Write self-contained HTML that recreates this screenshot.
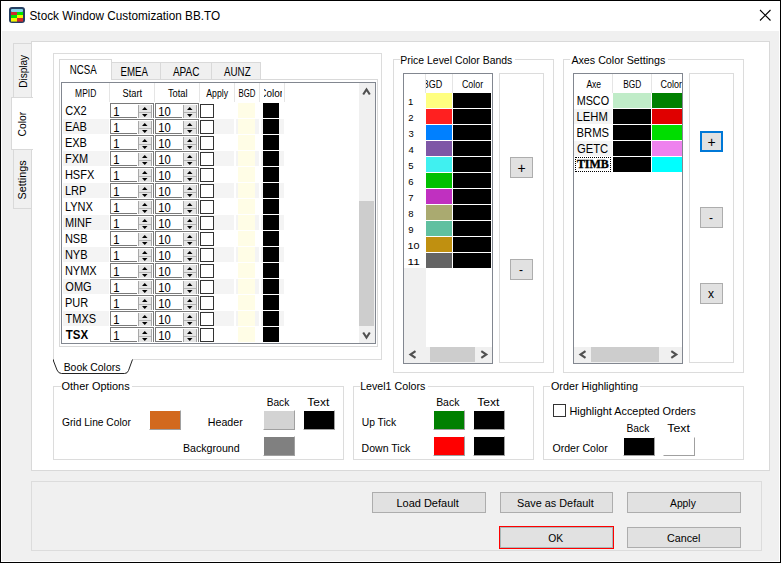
<!DOCTYPE html>
<html><head><meta charset="utf-8"><style>
html,body{margin:0;padding:0;width:781px;height:563px;overflow:hidden;background:#000}
body{position:relative;font-family:"Liberation Sans", sans-serif;}
div,svg{position:absolute}
</style></head><body>
<div style="left:0px;top:0px;width:781px;height:563px;background:#000"></div>
<div style="left:1px;top:1px;width:779px;height:561px;background:#fff"></div>
<div style="left:2px;top:31px;width:777px;height:530px;background:#f0f0f0"></div>
<svg style="left:9px;top:7px" width="16" height="16" viewBox="0 0 16 16"><rect x="0" y="0" width="16" height="16" rx="3" fill="#263f62"/>
<rect x="2" y="2" width="12" height="3" rx="1" fill="#86d2ea"/>
<rect x="2" y="5" width="6" height="3" fill="#d02a2a"/><rect x="8" y="5" width="6" height="3" fill="#00e400"/>
<rect x="2" y="8" width="6" height="3" fill="#00e400"/><rect x="8" y="8" width="6" height="3" fill="#f4f400"/>
<rect x="2" y="11" width="6" height="3.6" fill="#f4f400"/><rect x="8" y="11" width="6" height="3.6" fill="#d02a2a"/></svg>
<svg style="left:759px;top:9px" width="13" height="13" viewBox="0 0 13 13"><path d="M1 1L11.5 11.5M11.5 1L1 11.5" stroke="#000" stroke-width="1.1"/></svg>
<div style="left:31px;top:41px;width:739px;height:430px;border:1px solid #d9d9d9;box-sizing:border-box;background:#fff;"></div>
<div style="left:13px;top:43px;width:19px;height:55px;border:1px solid #d9d9d9;box-sizing:border-box;background:#f0f0f0;"></div>
<div style="left:13px;top:149px;width:19px;height:60px;border:1px solid #d9d9d9;box-sizing:border-box;background:#f0f0f0;"></div>
<div style="left:11px;top:97px;width:22px;height:53px;border:1px solid #d9d9d9;border-right:none;box-sizing:border-box;background:#fff"></div>
<div style="left:53px;top:53px;width:329px;height:307px;border:1px solid #dcdcdc;box-sizing:border-box;background:#fff;"></div>
<div style="left:59px;top:79px;width:319px;height:268px;border:1px solid #d9d9d9;box-sizing:border-box;background:#fff;"></div>
<div style="left:111px;top:62px;width:50px;height:18px;border:1px solid #d9d9d9;box-sizing:border-box;background:#f0f0f0;"></div>
<div style="left:160px;top:62px;width:52px;height:18px;border:1px solid #d9d9d9;box-sizing:border-box;background:#f0f0f0;"></div>
<div style="left:211px;top:62px;width:50px;height:18px;border:1px solid #d9d9d9;box-sizing:border-box;background:#f0f0f0;"></div>
<div style="left:59px;top:59px;width:53px;height:21px;border:1px solid #d9d9d9;border-bottom:none;box-sizing:border-box;background:#fff"></div>
<div style="left:61px;top:82px;width:315px;height:262px;border:1px solid #828790;box-sizing:border-box;background:#fff;"></div>
<div style="left:109px;top:83px;width:1px;height:19px;background:#e5e5e5"></div>
<div style="left:154px;top:83px;width:1px;height:19px;background:#e5e5e5"></div>
<div style="left:199px;top:83px;width:1px;height:19px;background:#e5e5e5"></div>
<div style="left:234px;top:83px;width:1px;height:19px;background:#e5e5e5"></div>
<div style="left:259px;top:83px;width:1px;height:19px;background:#e5e5e5"></div>
<div style="left:284px;top:83px;width:1px;height:19px;background:#e5e5e5"></div>
<div style="left:110px;top:103px;width:44px;height:15px;border:1px solid #7a7a7a;border-bottom:none;box-sizing:border-box;background:#fff"></div>
<div style="left:110px;top:117px;width:27px;height:1px;background:#7a7a7a"></div>
<div style="left:139px;top:105px;width:12px;height:13px;background:#e6e6e6"></div>
<div style="left:138px;top:105px;width:1px;height:13px;background:#a8a8a8"></div>
<div style="left:151px;top:105px;width:1px;height:13px;background:#a8a8a8"></div>
<div style="left:139px;top:112px;width:12px;height:1px;background:#b4b4b4"></div>
<svg style="left:138px;top:103px" width="14" height="16" viewBox="0 0 14 16"><path d="M4 7L9.5 7L6.75 4Z" fill="#000"/><path d="M4 11L9.5 11L6.75 14Z" fill="#000"/></svg>
<div style="left:155px;top:103px;width:44px;height:15px;border:1px solid #7a7a7a;border-bottom:none;box-sizing:border-box;background:#fff"></div>
<div style="left:155px;top:117px;width:27px;height:1px;background:#7a7a7a"></div>
<div style="left:184px;top:105px;width:12px;height:13px;background:#e6e6e6"></div>
<div style="left:183px;top:105px;width:1px;height:13px;background:#a8a8a8"></div>
<div style="left:196px;top:105px;width:1px;height:13px;background:#a8a8a8"></div>
<div style="left:184px;top:112px;width:12px;height:1px;background:#b4b4b4"></div>
<svg style="left:183px;top:103px" width="14" height="16" viewBox="0 0 14 16"><path d="M4 7L9.5 7L6.75 4Z" fill="#000"/><path d="M4 11L9.5 11L6.75 14Z" fill="#000"/></svg>
<div style="left:200px;top:104px;width:14px;height:14px;border:1px solid #333;box-sizing:border-box;background:#fff;"></div>
<div style="left:238px;top:103px;width:17px;height:15px;background:#fffde6"></div>
<div style="left:263px;top:103px;width:16px;height:15px;background:#000"></div>
<div style="left:63px;top:119px;width:46px;height:15px;background:#f4f4f4"></div>
<div style="left:111px;top:119px;width:43px;height:15px;background:#f4f4f4"></div>
<div style="left:156px;top:119px;width:43px;height:15px;background:#f4f4f4"></div>
<div style="left:201px;top:119px;width:33px;height:15px;background:#f4f4f4"></div>
<div style="left:236px;top:119px;width:23px;height:15px;background:#f4f4f4"></div>
<div style="left:261px;top:119px;width:23px;height:15px;background:#f4f4f4"></div>
<div style="left:110px;top:119px;width:44px;height:15px;border:1px solid #7a7a7a;border-bottom:none;box-sizing:border-box;background:#fff"></div>
<div style="left:110px;top:133px;width:27px;height:1px;background:#7a7a7a"></div>
<div style="left:139px;top:121px;width:12px;height:13px;background:#e6e6e6"></div>
<div style="left:138px;top:121px;width:1px;height:13px;background:#a8a8a8"></div>
<div style="left:151px;top:121px;width:1px;height:13px;background:#a8a8a8"></div>
<div style="left:139px;top:128px;width:12px;height:1px;background:#b4b4b4"></div>
<svg style="left:138px;top:119px" width="14" height="16" viewBox="0 0 14 16"><path d="M4 7L9.5 7L6.75 4Z" fill="#000"/><path d="M4 11L9.5 11L6.75 14Z" fill="#000"/></svg>
<div style="left:155px;top:119px;width:44px;height:15px;border:1px solid #7a7a7a;border-bottom:none;box-sizing:border-box;background:#fff"></div>
<div style="left:155px;top:133px;width:27px;height:1px;background:#7a7a7a"></div>
<div style="left:184px;top:121px;width:12px;height:13px;background:#e6e6e6"></div>
<div style="left:183px;top:121px;width:1px;height:13px;background:#a8a8a8"></div>
<div style="left:196px;top:121px;width:1px;height:13px;background:#a8a8a8"></div>
<div style="left:184px;top:128px;width:12px;height:1px;background:#b4b4b4"></div>
<svg style="left:183px;top:119px" width="14" height="16" viewBox="0 0 14 16"><path d="M4 7L9.5 7L6.75 4Z" fill="#000"/><path d="M4 11L9.5 11L6.75 14Z" fill="#000"/></svg>
<div style="left:200px;top:120px;width:14px;height:14px;border:1px solid #333;box-sizing:border-box;background:#fff;"></div>
<div style="left:238px;top:119px;width:17px;height:15px;background:#fffde6"></div>
<div style="left:263px;top:119px;width:16px;height:15px;background:#000"></div>
<div style="left:110px;top:135px;width:44px;height:15px;border:1px solid #7a7a7a;border-bottom:none;box-sizing:border-box;background:#fff"></div>
<div style="left:110px;top:149px;width:27px;height:1px;background:#7a7a7a"></div>
<div style="left:139px;top:137px;width:12px;height:13px;background:#e6e6e6"></div>
<div style="left:138px;top:137px;width:1px;height:13px;background:#a8a8a8"></div>
<div style="left:151px;top:137px;width:1px;height:13px;background:#a8a8a8"></div>
<div style="left:139px;top:144px;width:12px;height:1px;background:#b4b4b4"></div>
<svg style="left:138px;top:135px" width="14" height="16" viewBox="0 0 14 16"><path d="M4 7L9.5 7L6.75 4Z" fill="#000"/><path d="M4 11L9.5 11L6.75 14Z" fill="#000"/></svg>
<div style="left:155px;top:135px;width:44px;height:15px;border:1px solid #7a7a7a;border-bottom:none;box-sizing:border-box;background:#fff"></div>
<div style="left:155px;top:149px;width:27px;height:1px;background:#7a7a7a"></div>
<div style="left:184px;top:137px;width:12px;height:13px;background:#e6e6e6"></div>
<div style="left:183px;top:137px;width:1px;height:13px;background:#a8a8a8"></div>
<div style="left:196px;top:137px;width:1px;height:13px;background:#a8a8a8"></div>
<div style="left:184px;top:144px;width:12px;height:1px;background:#b4b4b4"></div>
<svg style="left:183px;top:135px" width="14" height="16" viewBox="0 0 14 16"><path d="M4 7L9.5 7L6.75 4Z" fill="#000"/><path d="M4 11L9.5 11L6.75 14Z" fill="#000"/></svg>
<div style="left:200px;top:136px;width:14px;height:14px;border:1px solid #333;box-sizing:border-box;background:#fff;"></div>
<div style="left:238px;top:135px;width:17px;height:15px;background:#fffde6"></div>
<div style="left:263px;top:135px;width:16px;height:15px;background:#000"></div>
<div style="left:63px;top:151px;width:46px;height:15px;background:#f4f4f4"></div>
<div style="left:111px;top:151px;width:43px;height:15px;background:#f4f4f4"></div>
<div style="left:156px;top:151px;width:43px;height:15px;background:#f4f4f4"></div>
<div style="left:201px;top:151px;width:33px;height:15px;background:#f4f4f4"></div>
<div style="left:236px;top:151px;width:23px;height:15px;background:#f4f4f4"></div>
<div style="left:261px;top:151px;width:23px;height:15px;background:#f4f4f4"></div>
<div style="left:110px;top:151px;width:44px;height:15px;border:1px solid #7a7a7a;border-bottom:none;box-sizing:border-box;background:#fff"></div>
<div style="left:110px;top:165px;width:27px;height:1px;background:#7a7a7a"></div>
<div style="left:139px;top:153px;width:12px;height:13px;background:#e6e6e6"></div>
<div style="left:138px;top:153px;width:1px;height:13px;background:#a8a8a8"></div>
<div style="left:151px;top:153px;width:1px;height:13px;background:#a8a8a8"></div>
<div style="left:139px;top:160px;width:12px;height:1px;background:#b4b4b4"></div>
<svg style="left:138px;top:151px" width="14" height="16" viewBox="0 0 14 16"><path d="M4 7L9.5 7L6.75 4Z" fill="#000"/><path d="M4 11L9.5 11L6.75 14Z" fill="#000"/></svg>
<div style="left:155px;top:151px;width:44px;height:15px;border:1px solid #7a7a7a;border-bottom:none;box-sizing:border-box;background:#fff"></div>
<div style="left:155px;top:165px;width:27px;height:1px;background:#7a7a7a"></div>
<div style="left:184px;top:153px;width:12px;height:13px;background:#e6e6e6"></div>
<div style="left:183px;top:153px;width:1px;height:13px;background:#a8a8a8"></div>
<div style="left:196px;top:153px;width:1px;height:13px;background:#a8a8a8"></div>
<div style="left:184px;top:160px;width:12px;height:1px;background:#b4b4b4"></div>
<svg style="left:183px;top:151px" width="14" height="16" viewBox="0 0 14 16"><path d="M4 7L9.5 7L6.75 4Z" fill="#000"/><path d="M4 11L9.5 11L6.75 14Z" fill="#000"/></svg>
<div style="left:200px;top:152px;width:14px;height:14px;border:1px solid #333;box-sizing:border-box;background:#fff;"></div>
<div style="left:238px;top:151px;width:17px;height:15px;background:#fffde6"></div>
<div style="left:263px;top:151px;width:16px;height:15px;background:#000"></div>
<div style="left:110px;top:167px;width:44px;height:15px;border:1px solid #7a7a7a;border-bottom:none;box-sizing:border-box;background:#fff"></div>
<div style="left:110px;top:181px;width:27px;height:1px;background:#7a7a7a"></div>
<div style="left:139px;top:169px;width:12px;height:13px;background:#e6e6e6"></div>
<div style="left:138px;top:169px;width:1px;height:13px;background:#a8a8a8"></div>
<div style="left:151px;top:169px;width:1px;height:13px;background:#a8a8a8"></div>
<div style="left:139px;top:176px;width:12px;height:1px;background:#b4b4b4"></div>
<svg style="left:138px;top:167px" width="14" height="16" viewBox="0 0 14 16"><path d="M4 7L9.5 7L6.75 4Z" fill="#000"/><path d="M4 11L9.5 11L6.75 14Z" fill="#000"/></svg>
<div style="left:155px;top:167px;width:44px;height:15px;border:1px solid #7a7a7a;border-bottom:none;box-sizing:border-box;background:#fff"></div>
<div style="left:155px;top:181px;width:27px;height:1px;background:#7a7a7a"></div>
<div style="left:184px;top:169px;width:12px;height:13px;background:#e6e6e6"></div>
<div style="left:183px;top:169px;width:1px;height:13px;background:#a8a8a8"></div>
<div style="left:196px;top:169px;width:1px;height:13px;background:#a8a8a8"></div>
<div style="left:184px;top:176px;width:12px;height:1px;background:#b4b4b4"></div>
<svg style="left:183px;top:167px" width="14" height="16" viewBox="0 0 14 16"><path d="M4 7L9.5 7L6.75 4Z" fill="#000"/><path d="M4 11L9.5 11L6.75 14Z" fill="#000"/></svg>
<div style="left:200px;top:168px;width:14px;height:14px;border:1px solid #333;box-sizing:border-box;background:#fff;"></div>
<div style="left:238px;top:167px;width:17px;height:15px;background:#fffde6"></div>
<div style="left:263px;top:167px;width:16px;height:15px;background:#000"></div>
<div style="left:63px;top:183px;width:46px;height:15px;background:#f4f4f4"></div>
<div style="left:111px;top:183px;width:43px;height:15px;background:#f4f4f4"></div>
<div style="left:156px;top:183px;width:43px;height:15px;background:#f4f4f4"></div>
<div style="left:201px;top:183px;width:33px;height:15px;background:#f4f4f4"></div>
<div style="left:236px;top:183px;width:23px;height:15px;background:#f4f4f4"></div>
<div style="left:261px;top:183px;width:23px;height:15px;background:#f4f4f4"></div>
<div style="left:110px;top:183px;width:44px;height:15px;border:1px solid #7a7a7a;border-bottom:none;box-sizing:border-box;background:#fff"></div>
<div style="left:110px;top:197px;width:27px;height:1px;background:#7a7a7a"></div>
<div style="left:139px;top:185px;width:12px;height:13px;background:#e6e6e6"></div>
<div style="left:138px;top:185px;width:1px;height:13px;background:#a8a8a8"></div>
<div style="left:151px;top:185px;width:1px;height:13px;background:#a8a8a8"></div>
<div style="left:139px;top:192px;width:12px;height:1px;background:#b4b4b4"></div>
<svg style="left:138px;top:183px" width="14" height="16" viewBox="0 0 14 16"><path d="M4 7L9.5 7L6.75 4Z" fill="#000"/><path d="M4 11L9.5 11L6.75 14Z" fill="#000"/></svg>
<div style="left:155px;top:183px;width:44px;height:15px;border:1px solid #7a7a7a;border-bottom:none;box-sizing:border-box;background:#fff"></div>
<div style="left:155px;top:197px;width:27px;height:1px;background:#7a7a7a"></div>
<div style="left:184px;top:185px;width:12px;height:13px;background:#e6e6e6"></div>
<div style="left:183px;top:185px;width:1px;height:13px;background:#a8a8a8"></div>
<div style="left:196px;top:185px;width:1px;height:13px;background:#a8a8a8"></div>
<div style="left:184px;top:192px;width:12px;height:1px;background:#b4b4b4"></div>
<svg style="left:183px;top:183px" width="14" height="16" viewBox="0 0 14 16"><path d="M4 7L9.5 7L6.75 4Z" fill="#000"/><path d="M4 11L9.5 11L6.75 14Z" fill="#000"/></svg>
<div style="left:200px;top:184px;width:14px;height:14px;border:1px solid #333;box-sizing:border-box;background:#fff;"></div>
<div style="left:238px;top:183px;width:17px;height:15px;background:#fffde6"></div>
<div style="left:263px;top:183px;width:16px;height:15px;background:#000"></div>
<div style="left:110px;top:199px;width:44px;height:15px;border:1px solid #7a7a7a;border-bottom:none;box-sizing:border-box;background:#fff"></div>
<div style="left:110px;top:213px;width:27px;height:1px;background:#7a7a7a"></div>
<div style="left:139px;top:201px;width:12px;height:13px;background:#e6e6e6"></div>
<div style="left:138px;top:201px;width:1px;height:13px;background:#a8a8a8"></div>
<div style="left:151px;top:201px;width:1px;height:13px;background:#a8a8a8"></div>
<div style="left:139px;top:208px;width:12px;height:1px;background:#b4b4b4"></div>
<svg style="left:138px;top:199px" width="14" height="16" viewBox="0 0 14 16"><path d="M4 7L9.5 7L6.75 4Z" fill="#000"/><path d="M4 11L9.5 11L6.75 14Z" fill="#000"/></svg>
<div style="left:155px;top:199px;width:44px;height:15px;border:1px solid #7a7a7a;border-bottom:none;box-sizing:border-box;background:#fff"></div>
<div style="left:155px;top:213px;width:27px;height:1px;background:#7a7a7a"></div>
<div style="left:184px;top:201px;width:12px;height:13px;background:#e6e6e6"></div>
<div style="left:183px;top:201px;width:1px;height:13px;background:#a8a8a8"></div>
<div style="left:196px;top:201px;width:1px;height:13px;background:#a8a8a8"></div>
<div style="left:184px;top:208px;width:12px;height:1px;background:#b4b4b4"></div>
<svg style="left:183px;top:199px" width="14" height="16" viewBox="0 0 14 16"><path d="M4 7L9.5 7L6.75 4Z" fill="#000"/><path d="M4 11L9.5 11L6.75 14Z" fill="#000"/></svg>
<div style="left:200px;top:200px;width:14px;height:14px;border:1px solid #333;box-sizing:border-box;background:#fff;"></div>
<div style="left:238px;top:199px;width:17px;height:15px;background:#fffde6"></div>
<div style="left:263px;top:199px;width:16px;height:15px;background:#000"></div>
<div style="left:63px;top:215px;width:46px;height:15px;background:#f4f4f4"></div>
<div style="left:111px;top:215px;width:43px;height:15px;background:#f4f4f4"></div>
<div style="left:156px;top:215px;width:43px;height:15px;background:#f4f4f4"></div>
<div style="left:201px;top:215px;width:33px;height:15px;background:#f4f4f4"></div>
<div style="left:236px;top:215px;width:23px;height:15px;background:#f4f4f4"></div>
<div style="left:261px;top:215px;width:23px;height:15px;background:#f4f4f4"></div>
<div style="left:110px;top:215px;width:44px;height:15px;border:1px solid #7a7a7a;border-bottom:none;box-sizing:border-box;background:#fff"></div>
<div style="left:110px;top:229px;width:27px;height:1px;background:#7a7a7a"></div>
<div style="left:139px;top:217px;width:12px;height:13px;background:#e6e6e6"></div>
<div style="left:138px;top:217px;width:1px;height:13px;background:#a8a8a8"></div>
<div style="left:151px;top:217px;width:1px;height:13px;background:#a8a8a8"></div>
<div style="left:139px;top:224px;width:12px;height:1px;background:#b4b4b4"></div>
<svg style="left:138px;top:215px" width="14" height="16" viewBox="0 0 14 16"><path d="M4 7L9.5 7L6.75 4Z" fill="#000"/><path d="M4 11L9.5 11L6.75 14Z" fill="#000"/></svg>
<div style="left:155px;top:215px;width:44px;height:15px;border:1px solid #7a7a7a;border-bottom:none;box-sizing:border-box;background:#fff"></div>
<div style="left:155px;top:229px;width:27px;height:1px;background:#7a7a7a"></div>
<div style="left:184px;top:217px;width:12px;height:13px;background:#e6e6e6"></div>
<div style="left:183px;top:217px;width:1px;height:13px;background:#a8a8a8"></div>
<div style="left:196px;top:217px;width:1px;height:13px;background:#a8a8a8"></div>
<div style="left:184px;top:224px;width:12px;height:1px;background:#b4b4b4"></div>
<svg style="left:183px;top:215px" width="14" height="16" viewBox="0 0 14 16"><path d="M4 7L9.5 7L6.75 4Z" fill="#000"/><path d="M4 11L9.5 11L6.75 14Z" fill="#000"/></svg>
<div style="left:200px;top:216px;width:14px;height:14px;border:1px solid #333;box-sizing:border-box;background:#fff;"></div>
<div style="left:238px;top:215px;width:17px;height:15px;background:#fffde6"></div>
<div style="left:263px;top:215px;width:16px;height:15px;background:#000"></div>
<div style="left:110px;top:231px;width:44px;height:15px;border:1px solid #7a7a7a;border-bottom:none;box-sizing:border-box;background:#fff"></div>
<div style="left:110px;top:245px;width:27px;height:1px;background:#7a7a7a"></div>
<div style="left:139px;top:233px;width:12px;height:13px;background:#e6e6e6"></div>
<div style="left:138px;top:233px;width:1px;height:13px;background:#a8a8a8"></div>
<div style="left:151px;top:233px;width:1px;height:13px;background:#a8a8a8"></div>
<div style="left:139px;top:240px;width:12px;height:1px;background:#b4b4b4"></div>
<svg style="left:138px;top:231px" width="14" height="16" viewBox="0 0 14 16"><path d="M4 7L9.5 7L6.75 4Z" fill="#000"/><path d="M4 11L9.5 11L6.75 14Z" fill="#000"/></svg>
<div style="left:155px;top:231px;width:44px;height:15px;border:1px solid #7a7a7a;border-bottom:none;box-sizing:border-box;background:#fff"></div>
<div style="left:155px;top:245px;width:27px;height:1px;background:#7a7a7a"></div>
<div style="left:184px;top:233px;width:12px;height:13px;background:#e6e6e6"></div>
<div style="left:183px;top:233px;width:1px;height:13px;background:#a8a8a8"></div>
<div style="left:196px;top:233px;width:1px;height:13px;background:#a8a8a8"></div>
<div style="left:184px;top:240px;width:12px;height:1px;background:#b4b4b4"></div>
<svg style="left:183px;top:231px" width="14" height="16" viewBox="0 0 14 16"><path d="M4 7L9.5 7L6.75 4Z" fill="#000"/><path d="M4 11L9.5 11L6.75 14Z" fill="#000"/></svg>
<div style="left:200px;top:232px;width:14px;height:14px;border:1px solid #333;box-sizing:border-box;background:#fff;"></div>
<div style="left:238px;top:231px;width:17px;height:15px;background:#fffde6"></div>
<div style="left:263px;top:231px;width:16px;height:15px;background:#000"></div>
<div style="left:63px;top:247px;width:46px;height:15px;background:#f4f4f4"></div>
<div style="left:111px;top:247px;width:43px;height:15px;background:#f4f4f4"></div>
<div style="left:156px;top:247px;width:43px;height:15px;background:#f4f4f4"></div>
<div style="left:201px;top:247px;width:33px;height:15px;background:#f4f4f4"></div>
<div style="left:236px;top:247px;width:23px;height:15px;background:#f4f4f4"></div>
<div style="left:261px;top:247px;width:23px;height:15px;background:#f4f4f4"></div>
<div style="left:110px;top:247px;width:44px;height:15px;border:1px solid #7a7a7a;border-bottom:none;box-sizing:border-box;background:#fff"></div>
<div style="left:110px;top:261px;width:27px;height:1px;background:#7a7a7a"></div>
<div style="left:139px;top:249px;width:12px;height:13px;background:#e6e6e6"></div>
<div style="left:138px;top:249px;width:1px;height:13px;background:#a8a8a8"></div>
<div style="left:151px;top:249px;width:1px;height:13px;background:#a8a8a8"></div>
<div style="left:139px;top:256px;width:12px;height:1px;background:#b4b4b4"></div>
<svg style="left:138px;top:247px" width="14" height="16" viewBox="0 0 14 16"><path d="M4 7L9.5 7L6.75 4Z" fill="#000"/><path d="M4 11L9.5 11L6.75 14Z" fill="#000"/></svg>
<div style="left:155px;top:247px;width:44px;height:15px;border:1px solid #7a7a7a;border-bottom:none;box-sizing:border-box;background:#fff"></div>
<div style="left:155px;top:261px;width:27px;height:1px;background:#7a7a7a"></div>
<div style="left:184px;top:249px;width:12px;height:13px;background:#e6e6e6"></div>
<div style="left:183px;top:249px;width:1px;height:13px;background:#a8a8a8"></div>
<div style="left:196px;top:249px;width:1px;height:13px;background:#a8a8a8"></div>
<div style="left:184px;top:256px;width:12px;height:1px;background:#b4b4b4"></div>
<svg style="left:183px;top:247px" width="14" height="16" viewBox="0 0 14 16"><path d="M4 7L9.5 7L6.75 4Z" fill="#000"/><path d="M4 11L9.5 11L6.75 14Z" fill="#000"/></svg>
<div style="left:200px;top:248px;width:14px;height:14px;border:1px solid #333;box-sizing:border-box;background:#fff;"></div>
<div style="left:238px;top:247px;width:17px;height:15px;background:#fffde6"></div>
<div style="left:263px;top:247px;width:16px;height:15px;background:#000"></div>
<div style="left:110px;top:263px;width:44px;height:15px;border:1px solid #7a7a7a;border-bottom:none;box-sizing:border-box;background:#fff"></div>
<div style="left:110px;top:277px;width:27px;height:1px;background:#7a7a7a"></div>
<div style="left:139px;top:265px;width:12px;height:13px;background:#e6e6e6"></div>
<div style="left:138px;top:265px;width:1px;height:13px;background:#a8a8a8"></div>
<div style="left:151px;top:265px;width:1px;height:13px;background:#a8a8a8"></div>
<div style="left:139px;top:272px;width:12px;height:1px;background:#b4b4b4"></div>
<svg style="left:138px;top:263px" width="14" height="16" viewBox="0 0 14 16"><path d="M4 7L9.5 7L6.75 4Z" fill="#000"/><path d="M4 11L9.5 11L6.75 14Z" fill="#000"/></svg>
<div style="left:155px;top:263px;width:44px;height:15px;border:1px solid #7a7a7a;border-bottom:none;box-sizing:border-box;background:#fff"></div>
<div style="left:155px;top:277px;width:27px;height:1px;background:#7a7a7a"></div>
<div style="left:184px;top:265px;width:12px;height:13px;background:#e6e6e6"></div>
<div style="left:183px;top:265px;width:1px;height:13px;background:#a8a8a8"></div>
<div style="left:196px;top:265px;width:1px;height:13px;background:#a8a8a8"></div>
<div style="left:184px;top:272px;width:12px;height:1px;background:#b4b4b4"></div>
<svg style="left:183px;top:263px" width="14" height="16" viewBox="0 0 14 16"><path d="M4 7L9.5 7L6.75 4Z" fill="#000"/><path d="M4 11L9.5 11L6.75 14Z" fill="#000"/></svg>
<div style="left:200px;top:264px;width:14px;height:14px;border:1px solid #333;box-sizing:border-box;background:#fff;"></div>
<div style="left:238px;top:263px;width:17px;height:15px;background:#fffde6"></div>
<div style="left:263px;top:263px;width:16px;height:15px;background:#000"></div>
<div style="left:63px;top:279px;width:46px;height:15px;background:#f4f4f4"></div>
<div style="left:111px;top:279px;width:43px;height:15px;background:#f4f4f4"></div>
<div style="left:156px;top:279px;width:43px;height:15px;background:#f4f4f4"></div>
<div style="left:201px;top:279px;width:33px;height:15px;background:#f4f4f4"></div>
<div style="left:236px;top:279px;width:23px;height:15px;background:#f4f4f4"></div>
<div style="left:261px;top:279px;width:23px;height:15px;background:#f4f4f4"></div>
<div style="left:110px;top:279px;width:44px;height:15px;border:1px solid #7a7a7a;border-bottom:none;box-sizing:border-box;background:#fff"></div>
<div style="left:110px;top:293px;width:27px;height:1px;background:#7a7a7a"></div>
<div style="left:139px;top:281px;width:12px;height:13px;background:#e6e6e6"></div>
<div style="left:138px;top:281px;width:1px;height:13px;background:#a8a8a8"></div>
<div style="left:151px;top:281px;width:1px;height:13px;background:#a8a8a8"></div>
<div style="left:139px;top:288px;width:12px;height:1px;background:#b4b4b4"></div>
<svg style="left:138px;top:279px" width="14" height="16" viewBox="0 0 14 16"><path d="M4 7L9.5 7L6.75 4Z" fill="#000"/><path d="M4 11L9.5 11L6.75 14Z" fill="#000"/></svg>
<div style="left:155px;top:279px;width:44px;height:15px;border:1px solid #7a7a7a;border-bottom:none;box-sizing:border-box;background:#fff"></div>
<div style="left:155px;top:293px;width:27px;height:1px;background:#7a7a7a"></div>
<div style="left:184px;top:281px;width:12px;height:13px;background:#e6e6e6"></div>
<div style="left:183px;top:281px;width:1px;height:13px;background:#a8a8a8"></div>
<div style="left:196px;top:281px;width:1px;height:13px;background:#a8a8a8"></div>
<div style="left:184px;top:288px;width:12px;height:1px;background:#b4b4b4"></div>
<svg style="left:183px;top:279px" width="14" height="16" viewBox="0 0 14 16"><path d="M4 7L9.5 7L6.75 4Z" fill="#000"/><path d="M4 11L9.5 11L6.75 14Z" fill="#000"/></svg>
<div style="left:200px;top:280px;width:14px;height:14px;border:1px solid #333;box-sizing:border-box;background:#fff;"></div>
<div style="left:238px;top:279px;width:17px;height:15px;background:#fffde6"></div>
<div style="left:263px;top:279px;width:16px;height:15px;background:#000"></div>
<div style="left:110px;top:295px;width:44px;height:15px;border:1px solid #7a7a7a;border-bottom:none;box-sizing:border-box;background:#fff"></div>
<div style="left:110px;top:309px;width:27px;height:1px;background:#7a7a7a"></div>
<div style="left:139px;top:297px;width:12px;height:13px;background:#e6e6e6"></div>
<div style="left:138px;top:297px;width:1px;height:13px;background:#a8a8a8"></div>
<div style="left:151px;top:297px;width:1px;height:13px;background:#a8a8a8"></div>
<div style="left:139px;top:304px;width:12px;height:1px;background:#b4b4b4"></div>
<svg style="left:138px;top:295px" width="14" height="16" viewBox="0 0 14 16"><path d="M4 7L9.5 7L6.75 4Z" fill="#000"/><path d="M4 11L9.5 11L6.75 14Z" fill="#000"/></svg>
<div style="left:155px;top:295px;width:44px;height:15px;border:1px solid #7a7a7a;border-bottom:none;box-sizing:border-box;background:#fff"></div>
<div style="left:155px;top:309px;width:27px;height:1px;background:#7a7a7a"></div>
<div style="left:184px;top:297px;width:12px;height:13px;background:#e6e6e6"></div>
<div style="left:183px;top:297px;width:1px;height:13px;background:#a8a8a8"></div>
<div style="left:196px;top:297px;width:1px;height:13px;background:#a8a8a8"></div>
<div style="left:184px;top:304px;width:12px;height:1px;background:#b4b4b4"></div>
<svg style="left:183px;top:295px" width="14" height="16" viewBox="0 0 14 16"><path d="M4 7L9.5 7L6.75 4Z" fill="#000"/><path d="M4 11L9.5 11L6.75 14Z" fill="#000"/></svg>
<div style="left:200px;top:296px;width:14px;height:14px;border:1px solid #333;box-sizing:border-box;background:#fff;"></div>
<div style="left:238px;top:295px;width:17px;height:15px;background:#fffde6"></div>
<div style="left:263px;top:295px;width:16px;height:15px;background:#000"></div>
<div style="left:63px;top:311px;width:46px;height:15px;background:#f4f4f4"></div>
<div style="left:111px;top:311px;width:43px;height:15px;background:#f4f4f4"></div>
<div style="left:156px;top:311px;width:43px;height:15px;background:#f4f4f4"></div>
<div style="left:201px;top:311px;width:33px;height:15px;background:#f4f4f4"></div>
<div style="left:236px;top:311px;width:23px;height:15px;background:#f4f4f4"></div>
<div style="left:261px;top:311px;width:23px;height:15px;background:#f4f4f4"></div>
<div style="left:110px;top:311px;width:44px;height:15px;border:1px solid #7a7a7a;border-bottom:none;box-sizing:border-box;background:#fff"></div>
<div style="left:110px;top:325px;width:27px;height:1px;background:#7a7a7a"></div>
<div style="left:139px;top:313px;width:12px;height:13px;background:#e6e6e6"></div>
<div style="left:138px;top:313px;width:1px;height:13px;background:#a8a8a8"></div>
<div style="left:151px;top:313px;width:1px;height:13px;background:#a8a8a8"></div>
<div style="left:139px;top:320px;width:12px;height:1px;background:#b4b4b4"></div>
<svg style="left:138px;top:311px" width="14" height="16" viewBox="0 0 14 16"><path d="M4 7L9.5 7L6.75 4Z" fill="#000"/><path d="M4 11L9.5 11L6.75 14Z" fill="#000"/></svg>
<div style="left:155px;top:311px;width:44px;height:15px;border:1px solid #7a7a7a;border-bottom:none;box-sizing:border-box;background:#fff"></div>
<div style="left:155px;top:325px;width:27px;height:1px;background:#7a7a7a"></div>
<div style="left:184px;top:313px;width:12px;height:13px;background:#e6e6e6"></div>
<div style="left:183px;top:313px;width:1px;height:13px;background:#a8a8a8"></div>
<div style="left:196px;top:313px;width:1px;height:13px;background:#a8a8a8"></div>
<div style="left:184px;top:320px;width:12px;height:1px;background:#b4b4b4"></div>
<svg style="left:183px;top:311px" width="14" height="16" viewBox="0 0 14 16"><path d="M4 7L9.5 7L6.75 4Z" fill="#000"/><path d="M4 11L9.5 11L6.75 14Z" fill="#000"/></svg>
<div style="left:200px;top:312px;width:14px;height:14px;border:1px solid #333;box-sizing:border-box;background:#fff;"></div>
<div style="left:238px;top:311px;width:17px;height:15px;background:#fffde6"></div>
<div style="left:263px;top:311px;width:16px;height:15px;background:#000"></div>
<div style="left:110px;top:327px;width:44px;height:15px;border:1px solid #7a7a7a;border-bottom:none;box-sizing:border-box;background:#fff"></div>
<div style="left:110px;top:341px;width:27px;height:1px;background:#7a7a7a"></div>
<div style="left:139px;top:329px;width:12px;height:13px;background:#e6e6e6"></div>
<div style="left:138px;top:329px;width:1px;height:13px;background:#a8a8a8"></div>
<div style="left:151px;top:329px;width:1px;height:13px;background:#a8a8a8"></div>
<div style="left:139px;top:336px;width:12px;height:1px;background:#b4b4b4"></div>
<svg style="left:138px;top:327px" width="14" height="16" viewBox="0 0 14 16"><path d="M4 7L9.5 7L6.75 4Z" fill="#000"/><path d="M4 11L9.5 11L6.75 14Z" fill="#000"/></svg>
<div style="left:155px;top:327px;width:44px;height:15px;border:1px solid #7a7a7a;border-bottom:none;box-sizing:border-box;background:#fff"></div>
<div style="left:155px;top:341px;width:27px;height:1px;background:#7a7a7a"></div>
<div style="left:184px;top:329px;width:12px;height:13px;background:#e6e6e6"></div>
<div style="left:183px;top:329px;width:1px;height:13px;background:#a8a8a8"></div>
<div style="left:196px;top:329px;width:1px;height:13px;background:#a8a8a8"></div>
<div style="left:184px;top:336px;width:12px;height:1px;background:#b4b4b4"></div>
<svg style="left:183px;top:327px" width="14" height="16" viewBox="0 0 14 16"><path d="M4 7L9.5 7L6.75 4Z" fill="#000"/><path d="M4 11L9.5 11L6.75 14Z" fill="#000"/></svg>
<div style="left:200px;top:328px;width:14px;height:14px;border:1px solid #333;box-sizing:border-box;background:#fff;"></div>
<div style="left:238px;top:327px;width:17px;height:15px;background:#fffde6"></div>
<div style="left:263px;top:327px;width:16px;height:15px;background:#000"></div>
<div style="left:359px;top:83px;width:16px;height:260px;background:#f0f0f0"></div>
<div style="left:359px;top:201px;width:15px;height:125px;background:#cdcdcd"></div>
<svg style="left:0;top:0" width="781" height="563"><path d="M363.2 94.5 L366.5 89.5 L369.8 94.5" stroke="#505050" stroke-width="2.1" fill="none"/></svg>
<svg style="left:0;top:0" width="781" height="563"><path d="M363.2 332.5 L366.5 337.5 L369.8 332.5" stroke="#505050" stroke-width="2.1" fill="none"/></svg>
<div style="left:54px;top:359px;width:78px;height:14px;background:#fff"></div>
<svg style="left:50px;top:355px" width="90" height="22" viewBox="0 0 90 22"><path d="M3.5 4.5 L3.5 6 L7 15 Q8.5 18.5 11.5 18.5 L74.5 18.5 Q77.5 18.5 78.5 15.5 L82.5 4.5" stroke="#222" stroke-width="1" fill="#fff"/></svg>
<div style="left:393px;top:59px;width:161px;height:314px;border:1px solid #dcdcdc;box-sizing:border-box;background:transparent;"></div>
<div style="left:400px;top:59px;width:115px;height:1px;background:#fff"></div>
<div style="left:403px;top:73px;width:90px;height:291px;border:1px solid #828790;box-sizing:border-box;background:#fff;"></div>
<div style="left:425px;top:74px;width:1px;height:19px;background:#e5e5e5"></div>
<div style="left:452px;top:74px;width:1px;height:19px;background:#e5e5e5"></div>
<div style="left:426px;top:93px;width:26px;height:15px;background:#ffff80"></div>
<div style="left:453px;top:93px;width:38px;height:15px;background:#000"></div>
<div style="left:426px;top:109px;width:26px;height:15px;background:#ff2020"></div>
<div style="left:453px;top:109px;width:38px;height:15px;background:#000"></div>
<div style="left:426px;top:125px;width:26px;height:15px;background:#0080ff"></div>
<div style="left:453px;top:125px;width:38px;height:15px;background:#000"></div>
<div style="left:426px;top:141px;width:26px;height:15px;background:#7e57a6"></div>
<div style="left:453px;top:141px;width:38px;height:15px;background:#000"></div>
<div style="left:426px;top:157px;width:26px;height:15px;background:#40f0f0"></div>
<div style="left:453px;top:157px;width:38px;height:15px;background:#000"></div>
<div style="left:426px;top:173px;width:26px;height:15px;background:#00c000"></div>
<div style="left:453px;top:173px;width:38px;height:15px;background:#000"></div>
<div style="left:426px;top:189px;width:26px;height:15px;background:#c030c0"></div>
<div style="left:453px;top:189px;width:38px;height:15px;background:#000"></div>
<div style="left:426px;top:205px;width:26px;height:15px;background:#aaaa70"></div>
<div style="left:453px;top:205px;width:38px;height:15px;background:#000"></div>
<div style="left:426px;top:221px;width:26px;height:15px;background:#60c0a0"></div>
<div style="left:453px;top:221px;width:38px;height:15px;background:#000"></div>
<div style="left:426px;top:237px;width:26px;height:15px;background:#c09010"></div>
<div style="left:453px;top:237px;width:38px;height:15px;background:#000"></div>
<div style="left:426px;top:253px;width:26px;height:15px;background:#646464"></div>
<div style="left:453px;top:253px;width:38px;height:15px;background:#000"></div>
<div style="left:404px;top:268px;width:22px;height:79px;background:#f0f0f0"></div>
<div style="left:404px;top:347px;width:88px;height:16px;background:#f0f0f0"></div>
<div style="left:430px;top:347px;width:45px;height:15px;background:#cdcdcd"></div>
<svg style="left:0;top:0" width="781" height="563"><path d="M415.5 351.2 L410.5 354.5 L415.5 357.8" stroke="#505050" stroke-width="2.1" fill="none"/></svg>
<svg style="left:0;top:0" width="781" height="563"><path d="M481.3 351.2 L486.3 354.5 L481.3 357.8" stroke="#505050" stroke-width="2.1" fill="none"/></svg>
<div style="left:499px;top:73px;width:45px;height:290px;border:1px solid #dcdcdc;box-sizing:border-box;background:transparent;"></div>
<div style="left:510px;top:157px;width:23px;height:21px;border:1px solid #adadad;box-sizing:border-box;background:#e1e1e1;"></div>
<div style="left:510px;top:259px;width:23px;height:21px;border:1px solid #adadad;box-sizing:border-box;background:#e1e1e1;"></div>
<div style="left:563px;top:59px;width:181px;height:314px;border:1px solid #dcdcdc;box-sizing:border-box;background:transparent;"></div>
<div style="left:570px;top:59px;width:98px;height:1px;background:#fff"></div>
<div style="left:573px;top:73px;width:110px;height:291px;border:1px solid #828790;box-sizing:border-box;background:#fff;"></div>
<div style="left:612px;top:74px;width:1px;height:19px;background:#e5e5e5"></div>
<div style="left:651px;top:74px;width:1px;height:19px;background:#e5e5e5"></div>
<div style="left:613px;top:93px;width:38px;height:15px;background:#c0ecc8"></div>
<div style="left:652px;top:93px;width:30px;height:15px;background:#008000"></div>
<div style="left:574px;top:109px;width:38px;height:15px;background:#f4f4f4"></div>
<div style="left:613px;top:109px;width:38px;height:15px;background:#000"></div>
<div style="left:652px;top:109px;width:30px;height:15px;background:#e00000"></div>
<div style="left:613px;top:125px;width:38px;height:15px;background:#000"></div>
<div style="left:652px;top:125px;width:30px;height:15px;background:#00dd00"></div>
<div style="left:574px;top:141px;width:38px;height:15px;background:#f4f4f4"></div>
<div style="left:613px;top:141px;width:38px;height:15px;background:#000"></div>
<div style="left:652px;top:141px;width:30px;height:15px;background:#ee82ee"></div>
<div style="left:613px;top:157px;width:38px;height:15px;background:#000"></div>
<div style="left:652px;top:157px;width:30px;height:15px;background:#00ffff"></div>
<div style="left:575px;top:157px;width:36px;height:15px;border:1px dotted #000;box-sizing:border-box"></div>
<div style="left:574px;top:347px;width:108px;height:16px;background:#f0f0f0"></div>
<div style="left:591px;top:347px;width:68px;height:15px;background:#cdcdcd"></div>
<svg style="left:0;top:0" width="781" height="563"><path d="M585.5 351.2 L580.5 354.5 L585.5 357.8" stroke="#505050" stroke-width="2.1" fill="none"/></svg>
<svg style="left:0;top:0" width="781" height="563"><path d="M671.3 351.2 L676.3 354.5 L671.3 357.8" stroke="#505050" stroke-width="2.1" fill="none"/></svg>
<div style="left:689px;top:73px;width:45px;height:290px;border:1px solid #dcdcdc;box-sizing:border-box;background:transparent;"></div>
<div style="left:700px;top:131px;width:23px;height:21px;border:1px solid #0078d7;box-sizing:border-box;background:#e1e1e1;border-width:2px"></div>
<div style="left:700px;top:207px;width:23px;height:21px;border:1px solid #adadad;box-sizing:border-box;background:#e1e1e1;"></div>
<div style="left:700px;top:283px;width:23px;height:21px;border:1px solid #adadad;box-sizing:border-box;background:#e1e1e1;"></div>
<div style="left:53px;top:386px;width:291px;height:74px;border:1px solid #dcdcdc;box-sizing:border-box;background:transparent;"></div>
<div style="left:61px;top:386px;width:71px;height:1px;background:#fff"></div>
<div style="left:149px;top:410px;width:32px;height:20px;background:#d2691e;border-top:1px solid #fff;border-left:1px solid #fff;border-right:1px solid #a0a0a0;border-bottom:1px solid #a0a0a0;box-sizing:border-box"></div>
<div style="left:263px;top:410px;width:32px;height:20px;background:#d3d3d3;border-top:1px solid #fff;border-left:1px solid #fff;border-right:1px solid #a0a0a0;border-bottom:1px solid #a0a0a0;box-sizing:border-box"></div>
<div style="left:303px;top:410px;width:32px;height:20px;background:#000;border-top:1px solid #fff;border-left:1px solid #fff;border-right:1px solid #a0a0a0;border-bottom:1px solid #a0a0a0;box-sizing:border-box"></div>
<div style="left:263px;top:436px;width:32px;height:20px;background:#808080;border-top:1px solid #fff;border-left:1px solid #fff;border-right:1px solid #a0a0a0;border-bottom:1px solid #a0a0a0;box-sizing:border-box"></div>
<div style="left:353px;top:386px;width:181px;height:74px;border:1px solid #dcdcdc;box-sizing:border-box;background:transparent;"></div>
<div style="left:360px;top:386px;width:68px;height:1px;background:#fff"></div>
<div style="left:433px;top:410px;width:32px;height:20px;background:#008000;border-top:1px solid #fff;border-left:1px solid #fff;border-right:1px solid #a0a0a0;border-bottom:1px solid #a0a0a0;box-sizing:border-box"></div>
<div style="left:473px;top:410px;width:32px;height:20px;background:#000;border-top:1px solid #fff;border-left:1px solid #fff;border-right:1px solid #a0a0a0;border-bottom:1px solid #a0a0a0;box-sizing:border-box"></div>
<div style="left:433px;top:436px;width:32px;height:20px;background:#ff0000;border-top:1px solid #fff;border-left:1px solid #fff;border-right:1px solid #a0a0a0;border-bottom:1px solid #a0a0a0;box-sizing:border-box"></div>
<div style="left:473px;top:436px;width:32px;height:20px;background:#000;border-top:1px solid #fff;border-left:1px solid #fff;border-right:1px solid #a0a0a0;border-bottom:1px solid #a0a0a0;box-sizing:border-box"></div>
<div style="left:543px;top:386px;width:201px;height:74px;border:1px solid #dcdcdc;box-sizing:border-box;background:transparent;"></div>
<div style="left:550px;top:386px;width:90px;height:1px;background:#fff"></div>
<div style="left:553px;top:404px;width:13px;height:13px;border:1px solid #333;box-sizing:border-box;background:#fff;"></div>
<div style="left:623px;top:437px;width:32px;height:19px;background:#000;border-top:1px solid #fff;border-left:1px solid #fff;border-right:1px solid #a0a0a0;border-bottom:1px solid #a0a0a0;box-sizing:border-box"></div>
<div style="left:663px;top:437px;width:32px;height:19px;background:#fff;border-top:1px solid #fff;border-left:1px solid #fff;border-right:1px solid #a0a0a0;border-bottom:1px solid #a0a0a0;box-sizing:border-box"></div>
<div style="left:31px;top:481px;width:731px;height:70px;border:1px solid #dcdcdc;box-sizing:border-box;background:transparent;"></div>
<div style="left:372px;top:492px;width:114px;height:21px;border:1px solid #adadad;box-sizing:border-box;background:#e1e1e1;"></div>
<div style="left:500px;top:492px;width:113px;height:21px;border:1px solid #adadad;box-sizing:border-box;background:#e1e1e1;"></div>
<div style="left:627px;top:492px;width:114px;height:21px;border:1px solid #adadad;box-sizing:border-box;background:#e1e1e1;"></div>
<div style="left:499px;top:526px;width:115px;height:23px;border:1px solid #ff0000;box-sizing:border-box"></div>
<div style="left:500px;top:527px;width:113px;height:21px;border:1px solid #a8b8b8;box-sizing:border-box;background:#e1e1e1;"></div>
<div style="left:627px;top:527px;width:114px;height:21px;border:1px solid #adadad;box-sizing:border-box;background:#e1e1e1;"></div>
<svg style="left:0;top:0" width="781" height="563" viewBox="0 0 781 563"><defs><clipPath id="c13"><rect x="264" y="80" width="18" height="23"/></clipPath><clipPath id="c61"><rect x="426" y="74" width="26" height="19"/></clipPath><clipPath id="c79"><rect x="652" y="74" width="30" height="19"/></clipPath></defs><text x="29.53" y="19.81" font-family="Liberation Sans" font-size="12.5" textLength="190.63" lengthAdjust="spacingAndGlyphs" fill="#000">Stock Window Customization BB.TO</text>
<text transform="translate(22.7 86.9) rotate(-90)" x="-0.80" y="3.97" font-family="Liberation Sans" font-size="11.5" textLength="32.80" lengthAdjust="spacingAndGlyphs" fill="#000">Display</text>
<text transform="translate(22.1 136) rotate(-90)" x="-0.52" y="3.97" font-family="Liberation Sans" font-size="11.5" textLength="24.65" lengthAdjust="spacingAndGlyphs" fill="#000">Color</text>
<text transform="translate(22.5 199) rotate(-90)" x="-0.43" y="3.97" font-family="Liberation Sans" font-size="11.5" textLength="39.16" lengthAdjust="spacingAndGlyphs" fill="#000">Settings</text>
<text x="69.72" y="73.94" font-family="Liberation Sans" font-size="12" textLength="26.95" lengthAdjust="spacingAndGlyphs" fill="#000">NCSA</text>
<text x="120.43" y="75.54" font-family="Liberation Sans" font-size="12" textLength="27.45" lengthAdjust="spacingAndGlyphs" fill="#000">EMEA</text>
<text x="172.90" y="75.54" font-family="Liberation Sans" font-size="12" textLength="26.52" lengthAdjust="spacingAndGlyphs" fill="#000">APAC</text>
<text x="224.00" y="75.54" font-family="Liberation Sans" font-size="12" textLength="26.60" lengthAdjust="spacingAndGlyphs" fill="#000">AUNZ</text>
<text x="75.12" y="97.05" font-family="Liberation Sans" font-size="10" textLength="21.13" lengthAdjust="spacingAndGlyphs" fill="#000">MPID</text>
<text x="122.53" y="97.05" font-family="Liberation Sans" font-size="10" textLength="19.55" lengthAdjust="spacingAndGlyphs" fill="#000">Start</text>
<text x="167.91" y="97.05" font-family="Liberation Sans" font-size="10" textLength="19.66" lengthAdjust="spacingAndGlyphs" fill="#000">Total</text>
<text x="206.30" y="97.05" font-family="Liberation Sans" font-size="10" textLength="21.70" lengthAdjust="spacingAndGlyphs" fill="#000">Apply</text>
<text x="238.57" y="97.05" font-family="Liberation Sans" font-size="10" textLength="16.96" lengthAdjust="spacingAndGlyphs" fill="#000">BGD</text>
<text x="259.30" y="97.05" font-family="Liberation Sans" font-size="10" textLength="23.87" lengthAdjust="spacingAndGlyphs" fill="#000" clip-path="url(#c13)">Color</text>
<text x="65.25" y="114.81" font-family="Liberation Sans" font-size="12.5" textLength="21.40" lengthAdjust="spacingAndGlyphs" fill="#000">CX2</text>
<text x="113.21" y="115.51" font-family="Liberation Sans" font-size="12.5" textLength="6.26" lengthAdjust="spacingAndGlyphs" fill="#000">1</text>
<text x="158.21" y="115.51" font-family="Liberation Sans" font-size="12.5" textLength="12.51" lengthAdjust="spacingAndGlyphs" fill="#000">10</text>
<text x="64.92" y="130.81" font-family="Liberation Sans" font-size="12.5" textLength="22.01" lengthAdjust="spacingAndGlyphs" fill="#000">EAB</text>
<text x="113.21" y="131.51" font-family="Liberation Sans" font-size="12.5" textLength="6.26" lengthAdjust="spacingAndGlyphs" fill="#000">1</text>
<text x="158.21" y="131.51" font-family="Liberation Sans" font-size="12.5" textLength="12.51" lengthAdjust="spacingAndGlyphs" fill="#000">10</text>
<text x="64.92" y="146.81" font-family="Liberation Sans" font-size="12.5" textLength="22.01" lengthAdjust="spacingAndGlyphs" fill="#000">EXB</text>
<text x="113.21" y="147.51" font-family="Liberation Sans" font-size="12.5" textLength="6.26" lengthAdjust="spacingAndGlyphs" fill="#000">1</text>
<text x="158.21" y="147.51" font-family="Liberation Sans" font-size="12.5" textLength="12.51" lengthAdjust="spacingAndGlyphs" fill="#000">10</text>
<text x="64.92" y="162.81" font-family="Liberation Sans" font-size="12.5" textLength="23.22" lengthAdjust="spacingAndGlyphs" fill="#000">FXM</text>
<text x="113.21" y="163.51" font-family="Liberation Sans" font-size="12.5" textLength="6.26" lengthAdjust="spacingAndGlyphs" fill="#000">1</text>
<text x="158.21" y="163.51" font-family="Liberation Sans" font-size="12.5" textLength="12.51" lengthAdjust="spacingAndGlyphs" fill="#000">10</text>
<text x="64.92" y="178.81" font-family="Liberation Sans" font-size="12.5" textLength="29.34" lengthAdjust="spacingAndGlyphs" fill="#000">HSFX</text>
<text x="113.21" y="179.51" font-family="Liberation Sans" font-size="12.5" textLength="6.26" lengthAdjust="spacingAndGlyphs" fill="#000">1</text>
<text x="158.21" y="179.51" font-family="Liberation Sans" font-size="12.5" textLength="12.51" lengthAdjust="spacingAndGlyphs" fill="#000">10</text>
<text x="64.92" y="194.81" font-family="Liberation Sans" font-size="12.5" textLength="21.40" lengthAdjust="spacingAndGlyphs" fill="#000">LRP</text>
<text x="113.21" y="195.51" font-family="Liberation Sans" font-size="12.5" textLength="6.26" lengthAdjust="spacingAndGlyphs" fill="#000">1</text>
<text x="158.21" y="195.51" font-family="Liberation Sans" font-size="12.5" textLength="12.51" lengthAdjust="spacingAndGlyphs" fill="#000">10</text>
<text x="64.92" y="210.81" font-family="Liberation Sans" font-size="12.5" textLength="27.92" lengthAdjust="spacingAndGlyphs" fill="#000">LYNX</text>
<text x="113.21" y="211.51" font-family="Liberation Sans" font-size="12.5" textLength="6.26" lengthAdjust="spacingAndGlyphs" fill="#000">1</text>
<text x="158.21" y="211.51" font-family="Liberation Sans" font-size="12.5" textLength="12.51" lengthAdjust="spacingAndGlyphs" fill="#000">10</text>
<text x="64.92" y="226.81" font-family="Liberation Sans" font-size="12.5" textLength="26.88" lengthAdjust="spacingAndGlyphs" fill="#000">MINF</text>
<text x="113.21" y="227.51" font-family="Liberation Sans" font-size="12.5" textLength="6.26" lengthAdjust="spacingAndGlyphs" fill="#000">1</text>
<text x="158.21" y="227.51" font-family="Liberation Sans" font-size="12.5" textLength="12.51" lengthAdjust="spacingAndGlyphs" fill="#000">10</text>
<text x="64.92" y="242.81" font-family="Liberation Sans" font-size="12.5" textLength="22.62" lengthAdjust="spacingAndGlyphs" fill="#000">NSB</text>
<text x="113.21" y="243.51" font-family="Liberation Sans" font-size="12.5" textLength="6.26" lengthAdjust="spacingAndGlyphs" fill="#000">1</text>
<text x="158.21" y="243.51" font-family="Liberation Sans" font-size="12.5" textLength="12.51" lengthAdjust="spacingAndGlyphs" fill="#000">10</text>
<text x="64.92" y="258.81" font-family="Liberation Sans" font-size="12.5" textLength="22.62" lengthAdjust="spacingAndGlyphs" fill="#000">NYB</text>
<text x="113.21" y="259.51" font-family="Liberation Sans" font-size="12.5" textLength="6.26" lengthAdjust="spacingAndGlyphs" fill="#000">1</text>
<text x="158.21" y="259.51" font-family="Liberation Sans" font-size="12.5" textLength="12.51" lengthAdjust="spacingAndGlyphs" fill="#000">10</text>
<text x="64.92" y="274.81" font-family="Liberation Sans" font-size="12.5" textLength="31.78" lengthAdjust="spacingAndGlyphs" fill="#000">NYMX</text>
<text x="113.21" y="275.51" font-family="Liberation Sans" font-size="12.5" textLength="6.26" lengthAdjust="spacingAndGlyphs" fill="#000">1</text>
<text x="158.21" y="275.51" font-family="Liberation Sans" font-size="12.5" textLength="12.51" lengthAdjust="spacingAndGlyphs" fill="#000">10</text>
<text x="65.36" y="290.81" font-family="Liberation Sans" font-size="12.5" textLength="26.28" lengthAdjust="spacingAndGlyphs" fill="#000">OMG</text>
<text x="113.21" y="291.51" font-family="Liberation Sans" font-size="12.5" textLength="6.26" lengthAdjust="spacingAndGlyphs" fill="#000">1</text>
<text x="158.21" y="291.51" font-family="Liberation Sans" font-size="12.5" textLength="12.51" lengthAdjust="spacingAndGlyphs" fill="#000">10</text>
<text x="64.92" y="306.81" font-family="Liberation Sans" font-size="12.5" textLength="23.22" lengthAdjust="spacingAndGlyphs" fill="#000">PUR</text>
<text x="113.21" y="307.51" font-family="Liberation Sans" font-size="12.5" textLength="6.26" lengthAdjust="spacingAndGlyphs" fill="#000">1</text>
<text x="158.21" y="307.51" font-family="Liberation Sans" font-size="12.5" textLength="12.51" lengthAdjust="spacingAndGlyphs" fill="#000">10</text>
<text x="65.58" y="322.81" font-family="Liberation Sans" font-size="12.5" textLength="30.56" lengthAdjust="spacingAndGlyphs" fill="#000">TMXS</text>
<text x="113.21" y="323.51" font-family="Liberation Sans" font-size="12.5" textLength="6.26" lengthAdjust="spacingAndGlyphs" fill="#000">1</text>
<text x="158.21" y="323.51" font-family="Liberation Sans" font-size="12.5" textLength="12.51" lengthAdjust="spacingAndGlyphs" fill="#000">10</text>
<text x="65.69" y="338.81" font-family="Liberation Sans" font-weight="bold" font-size="12.5" textLength="22.37" lengthAdjust="spacingAndGlyphs" fill="#000">TSX</text>
<text x="113.21" y="339.51" font-family="Liberation Sans" font-size="12.5" textLength="6.26" lengthAdjust="spacingAndGlyphs" fill="#000">1</text>
<text x="158.21" y="339.51" font-family="Liberation Sans" font-size="12.5" textLength="12.51" lengthAdjust="spacingAndGlyphs" fill="#000">10</text>
<text x="63.67" y="370.80" font-family="Liberation Sans" font-size="11" textLength="56.75" lengthAdjust="spacingAndGlyphs" fill="#000">Book Colors</text>
<text x="400.37" y="63.80" font-family="Liberation Sans" font-size="11" textLength="111.95" lengthAdjust="spacingAndGlyphs" fill="#000">Price Level Color Bands</text>
<text x="422.78" y="87.85" font-family="Liberation Sans" font-size="10" textLength="19.50" lengthAdjust="spacingAndGlyphs" fill="#000" clip-path="url(#c61)">BGD</text>
<text x="461.96" y="87.85" font-family="Liberation Sans" font-size="10" textLength="21.16" lengthAdjust="spacingAndGlyphs" fill="#000">Color</text>
<text x="408.03" y="105.28" font-family="Liberation Sans" font-size="9.5" fill="#000">1</text>
<text x="408.22" y="121.28" font-family="Liberation Sans" font-size="9.5" fill="#000">2</text>
<text x="408.41" y="137.28" font-family="Liberation Sans" font-size="9.5" fill="#000">3</text>
<text x="408.51" y="153.28" font-family="Liberation Sans" font-size="9.5" fill="#000">4</text>
<text x="408.32" y="169.28" font-family="Liberation Sans" font-size="9.5" fill="#000">5</text>
<text x="408.22" y="185.28" font-family="Liberation Sans" font-size="9.5" fill="#000">6</text>
<text x="408.22" y="201.28" font-family="Liberation Sans" font-size="9.5" fill="#000">7</text>
<text x="408.32" y="217.28" font-family="Liberation Sans" font-size="9.5" fill="#000">8</text>
<text x="408.32" y="233.28" font-family="Liberation Sans" font-size="9.5" fill="#000">9</text>
<text x="407.54" y="249.28" font-family="Liberation Sans" font-size="9.5" textLength="12.05" lengthAdjust="spacingAndGlyphs" fill="#000">10</text>
<text x="407.47" y="265.28" font-family="Liberation Sans" font-size="9.5" textLength="12.27" lengthAdjust="spacingAndGlyphs" fill="#000">11</text>
<text x="517.44" y="173.13" font-family="Liberation Sans" font-size="14" fill="#000">+</text>
<text x="519.02" y="273.84" font-family="Liberation Sans" font-size="12" fill="#000">-</text>
<text x="571.40" y="63.80" font-family="Liberation Sans" font-size="11" textLength="93.92" lengthAdjust="spacingAndGlyphs" fill="#000">Axes Color Settings</text>
<text x="586.40" y="88.25" font-family="Liberation Sans" font-size="10" textLength="14.71" lengthAdjust="spacingAndGlyphs" fill="#000">Axe</text>
<text x="623.33" y="88.25" font-family="Liberation Sans" font-size="10" textLength="18.02" lengthAdjust="spacingAndGlyphs" fill="#000">BGD</text>
<text x="660.45" y="88.25" font-family="Liberation Sans" font-size="10" textLength="21.51" lengthAdjust="spacingAndGlyphs" fill="#000" clip-path="url(#c79)">Color</text>
<text x="576.63" y="104.81" font-family="Liberation Sans" font-size="12.5" textLength="32.48" lengthAdjust="spacingAndGlyphs" fill="#000">MSCO</text>
<text x="576.60" y="120.81" font-family="Liberation Sans" font-size="12.5" textLength="31.26" lengthAdjust="spacingAndGlyphs" fill="#000">LEHM</text>
<text x="576.60" y="136.81" font-family="Liberation Sans" font-size="12.5" textLength="32.50" lengthAdjust="spacingAndGlyphs" fill="#000">BRMS</text>
<text x="576.94" y="152.81" font-family="Liberation Sans" font-size="12.5" textLength="31.25" lengthAdjust="spacingAndGlyphs" fill="#000">GETC</text>
<text x="576.88" y="168.46" font-family="Liberation Serif" font-weight="bold" font-size="12.5" textLength="31.94" lengthAdjust="spacingAndGlyphs" fill="#000" stroke="#000" stroke-width="0.35">TIMB</text>
<text x="707.44" y="147.13" font-family="Liberation Sans" font-size="14" fill="#000">+</text>
<text x="709.02" y="222.14" font-family="Liberation Sans" font-size="12" fill="#000">-</text>
<text x="708.00" y="297.64" font-family="Liberation Sans" font-size="12" fill="#000">x</text>
<text x="61.56" y="390.30" font-family="Liberation Sans" font-size="11" textLength="68.07" lengthAdjust="spacingAndGlyphs" fill="#000">Other Options</text>
<text x="61.99" y="425.97" font-family="Liberation Sans" font-size="11.5" textLength="68.85" lengthAdjust="spacingAndGlyphs" fill="#000">Grid Line Color</text>
<text x="207.85" y="425.87" font-family="Liberation Sans" font-size="11.5" textLength="34.89" lengthAdjust="spacingAndGlyphs" fill="#000">Header</text>
<text x="266.69" y="405.77" font-family="Liberation Sans" font-size="11.5" textLength="22.61" lengthAdjust="spacingAndGlyphs" fill="#000">Back</text>
<text x="307.36" y="405.77" font-family="Liberation Sans" font-size="11.5" textLength="22.01" lengthAdjust="spacingAndGlyphs" fill="#000">Text</text>
<text x="182.95" y="451.67" font-family="Liberation Sans" font-size="11.5" textLength="56.75" lengthAdjust="spacingAndGlyphs" fill="#000">Background</text>
<text x="360.15" y="390.30" font-family="Liberation Sans" font-size="11" textLength="65.17" lengthAdjust="spacingAndGlyphs" fill="#000">Level1 Colors</text>
<text x="436.16" y="405.87" font-family="Liberation Sans" font-size="11.5" textLength="23.23" lengthAdjust="spacingAndGlyphs" fill="#000">Back</text>
<text x="477.16" y="405.87" font-family="Liberation Sans" font-size="11.5" textLength="22.22" lengthAdjust="spacingAndGlyphs" fill="#000">Text</text>
<text x="361.68" y="425.87" font-family="Liberation Sans" font-size="11.5" textLength="34.42" lengthAdjust="spacingAndGlyphs" fill="#000">Up Tick</text>
<text x="361.56" y="451.97" font-family="Liberation Sans" font-size="11.5" textLength="48.64" lengthAdjust="spacingAndGlyphs" fill="#000">Down Tick</text>
<text x="550.97" y="390.30" font-family="Liberation Sans" font-size="11" textLength="86.94" lengthAdjust="spacingAndGlyphs" fill="#000">Order Highlighting</text>
<text x="569.53" y="414.97" font-family="Liberation Sans" font-size="11.5" textLength="126.29" lengthAdjust="spacingAndGlyphs" fill="#000">Highlight Accepted Orders</text>
<text x="626.38" y="432.27" font-family="Liberation Sans" font-size="11.5" textLength="22.92" lengthAdjust="spacingAndGlyphs" fill="#000">Back</text>
<text x="667.35" y="432.27" font-family="Liberation Sans" font-size="11.5" textLength="22.62" lengthAdjust="spacingAndGlyphs" fill="#000">Text</text>
<text x="552.48" y="451.87" font-family="Liberation Sans" font-size="11.5" textLength="55.26" lengthAdjust="spacingAndGlyphs" fill="#000">Order Color</text>
<text x="396.42" y="506.77" font-family="Liberation Sans" font-size="11.5" textLength="62.36" lengthAdjust="spacingAndGlyphs" fill="#000">Load Default</text>
<text x="517.07" y="506.77" font-family="Liberation Sans" font-size="11.5" textLength="76.61" lengthAdjust="spacingAndGlyphs" fill="#000">Save as Default</text>
<text x="670.00" y="506.77" font-family="Liberation Sans" font-size="11.5" textLength="25.80" lengthAdjust="spacingAndGlyphs" fill="#000">Apply</text>
<text x="548.19" y="541.87" font-family="Liberation Sans" font-size="11.5" textLength="14.88" lengthAdjust="spacingAndGlyphs" fill="#000">OK</text>
<text x="666.96" y="541.87" font-family="Liberation Sans" font-size="11.5" textLength="33.51" lengthAdjust="spacingAndGlyphs" fill="#000">Cancel</text></svg>
</body></html>
